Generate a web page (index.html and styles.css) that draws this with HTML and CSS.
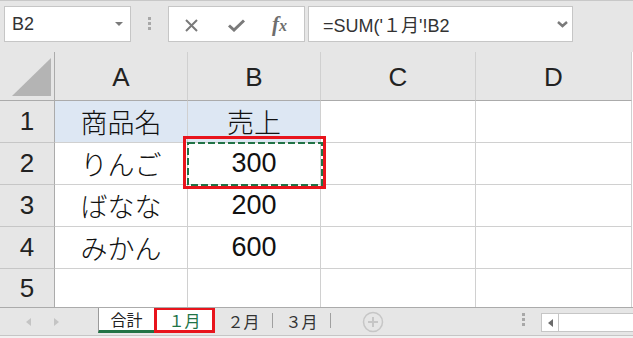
FILE: index.html
```html
<!DOCTYPE html>
<html lang="ja">
<head>
<meta charset="utf-8">
<link rel="stylesheet" href="styles.css">
</head>
<body>
<div class="toolbar">
  <div class="namebox"><span class="nb-text">B2</span><span class="nb-arrow"></span></div>
  <div class="vdots"><i></i><i></i><i></i></div>
  <div class="fxbox">
    <svg class="ic-x" width="13" height="13" viewBox="0 0 13 13"><path d="M1 1 L12 12 M12 1 L1 12" stroke="#7a7a7a" stroke-width="2" fill="none"/></svg>
    <svg class="ic-check" width="17" height="13" viewBox="0 0 17 13"><path d="M1 6.5 L6 11 L16 1.5" stroke="#7a7a7a" stroke-width="3" fill="none"/></svg>
    <span class="ic-fx"><span class="f">f</span><span class="x">x</span></span>
  </div>
  <div class="formula"><span class="f-text">=SUM('１月'!B2</span>
    <svg class="chev" width="11" height="7" viewBox="0 0 11 7"><path d="M1 1 L5.5 5 L10 1" stroke="#7a7a7a" stroke-width="2.5" fill="none"/></svg>
  </div>
</div>

<div class="sheet">
  <div class="corner"><svg width="54" height="48" viewBox="0 0 54 48"><polygon points="51,6 51,44 12,44" fill="#b4b4b4"/></svg></div>
  <div class="colh">A</div>
  <div class="colh">B</div>
  <div class="colh">C</div>
  <div class="colh">D</div>

  <div class="rowh">1</div>
  <div class="cell hl">商品名</div>
  <div class="cell hl">売上</div>
  <div class="cell"></div>
  <div class="cell"></div>

  <div class="rowh">2</div>
  <div class="cell">りんご</div>
  <div class="cell sel">300
    <svg class="ants" width="136" height="44" viewBox="0 0 136 44"><rect x="1" y="1" width="134" height="42" fill="none" stroke="#217346" stroke-width="2" stroke-dasharray="7 3"/></svg>
    <span class="redbox"></span>
  </div>
  <div class="cell"></div>
  <div class="cell"></div>

  <div class="rowh">3</div>
  <div class="cell">ばなな</div>
  <div class="cell">200</div>
  <div class="cell"></div>
  <div class="cell"></div>

  <div class="rowh">4</div>
  <div class="cell">みかん</div>
  <div class="cell">600</div>
  <div class="cell"></div>
  <div class="cell"></div>

  <div class="rowh last">5</div>
  <div class="cell last"></div>
  <div class="cell last"></div>
  <div class="cell last"></div>
  <div class="cell last"></div>
</div>

<div class="tabbar">
  <span class="nav nav-l"></span>
  <span class="nav nav-r"></span>
  <div class="tab active">合計</div>
  <div class="tab marked">１月</div>
  <div class="tab plain">２月</div>
  <span class="tsep"></span>
  <div class="tab plain">３月</div>
  <span class="tsep"></span>
  <svg class="plus" width="22" height="22" viewBox="0 0 22 22"><circle cx="11" cy="11" r="9.5" fill="none" stroke="#c6c6c6" stroke-width="1.5"/><path d="M11 6 V16 M6 11 H16" stroke="#c6c6c6" stroke-width="2"/></svg>
  <div class="vdots tdots"><i></i><i></i><i></i></div>
  <div class="hscroll"><span class="hs-btn"><span class="hs-tri"></span></span></div>
</div>
</body>
</html>
```

FILE: styles.css
```css
html { background: #f2f2f2; }
body {
  margin: 0;
  width: 633px;
  height: 338px;
  overflow: hidden;
  font-family: "Liberation Sans", "Noto Sans CJK JP", sans-serif;
  color: #222;
}

/* ---------- toolbar ---------- */
.toolbar {
  box-sizing: border-box;
  height: 52px;
  background: #e6e6e6;
  border-top: 1px solid #c8c8c8;
  padding: 5px 0 0 4px;
  display: flex;
  align-items: flex-start;
}
.toolbar > * { flex-shrink: 0; }
.namebox {
  box-sizing: border-box;
  width: 127px;
  height: 36px;
  background: #fff;
  border: 1px solid #c6c6c6;
  display: flex;
  align-items: center;
  padding-left: 7px;
  padding-right: 7px;
}
.nb-text { font-size: 18px; color: #333; }
.nb-arrow {
  margin-left: auto;
  width: 0; height: 0;
  border-left: 4px solid transparent;
  border-right: 4px solid transparent;
  border-top: 4px solid #7a7a7a;
}
.vdots {
  display: flex;
  flex-direction: column;
  gap: 2px;
  margin-left: 17px;
  margin-top: 11px;
}
.vdots i { display: block; width: 3px; height: 3px; background: #a8a8a8; }
.fxbox {
  box-sizing: border-box;
  width: 137px;
  height: 36px;
  margin-left: 17px;
  background: #fff;
  border: 1px solid #c6c6c6;
  display: flex;
  align-items: center;
  padding-left: 16px;
}
.ic-x { display: block; margin-top: 2px; }
.ic-check { display: block; margin-left: 30px; margin-top: 2px; }
.ic-fx {
  margin-left: 27px;
  font-family: "Liberation Serif", "DejaVu Serif", serif;
  font-style: italic;
  font-weight: bold;
  color: #6e6e6e;
  line-height: 1;
}
.ic-fx .f { font-size: 21px; }
.ic-fx .x { font-size: 16px; }
.formula {
  box-sizing: border-box;
  width: 265px;
  height: 36px;
  margin-left: 3px;
  background: #fff;
  border: 1px solid #c6c6c6;
  display: flex;
  align-items: center;
  padding-left: 14px;
  padding-right: 4px;
}
.f-text { font-size: 18px; color: #333; white-space: pre; }
.chev { display: block; margin-left: auto; margin-top: 1px; }

/* ---------- sheet ---------- */
.sheet {
  display: grid;
  grid-template-columns: 55px 133px 133px 155px 156px;
  grid-template-rows: 49px 42px 42px 42px 42px 38px;
  background: #fff;
}
.corner, .colh, .rowh, .cell {
  box-sizing: border-box;
  display: flex;
  align-items: center;
  justify-content: center;
}
.corner {
  background: #e6e6e6;
  border-right: 1px solid #ababab;
  border-bottom: 1px solid #ababab;
}
.corner svg { display: block; }
.colh {
  background: #e6e6e6;
  border-right: 1px solid #d0d0d0;
  border-bottom: 1px solid #ababab;
  font-size: 26px;
  padding-top: 2px;
}
.rowh {
  background: #e6e6e6;
  border-right: 1px solid #ababab;
  border-bottom: 1px solid #c6c6c6;
  font-size: 26px;
}
.cell {
  background: #fff;
  border-right: 1px solid #d0d0d0;
  border-bottom: 1px solid #d0d0d0;
  font-size: 27px;
  font-weight: 300;
  color: #111;
}
.cell.hl { background: #dde7f3; }
.rowh.last, .cell.last { border-bottom: none; }
.sel { position: relative; }
.ants { position: absolute; left: -1px; top: -1px; }
.redbox {
  position: absolute;
  left: -5px;
  top: -7px;
  width: 143px;
  height: 53px;
  box-sizing: border-box;
  border: 3px solid #e8141c;
}

/* ---------- tab bar ---------- */
.tabbar {
  box-sizing: content-box;
  height: 27px;
  background: #e6e6e6;
  border-top: 1px solid #ababab;
  border-bottom: 1px solid #c6c6c6;
  display: flex;
  align-items: flex-start;
  overflow: hidden;
}
.tabbar > * { flex-shrink: 0; }
.nav {
  width: 0; height: 0;
  margin-top: 10px;
  border-top: 4px solid transparent;
  border-bottom: 4px solid transparent;
}
.nav-l { margin-left: 26px; border-right: 5px solid #c4c4c4; }
.nav-r { margin-left: 23px; border-left: 5px solid #c4c4c4; }
.tab {
  box-sizing: border-box;
  height: 25px;
  display: flex;
  align-items: center;
  justify-content: center;
  font-family: "Noto Sans CJK JP", sans-serif;
  font-size: 16px;
  line-height: 1;
  color: #333;
}
.tab.active {
  margin-left: 39px;
  width: 56px;
  background: #fff;
  border-left: 1px solid #9a9a9a;
  border-bottom: 3px solid #217346;
  color: #222;
}
.tab.marked {
  width: 61px;
  height: 26px;
  margin-top: -1px;
  background: #fff;
  border: 3px solid #e8141c;
  color: #217346;
}
.tab.plain { width: 57px; }
.tsep { width: 1px; height: 15px; margin-top: 5px; background: #a0a0a0; }
.plus { display: block; margin-left: 31px; margin-top: 3px; }
.tdots { margin-left: 138px; margin-top: 5px; }
.hscroll {
  box-sizing: border-box;
  margin-left: 16px;
  margin-top: 5px;
  width: 100px;
  height: 19px;
  background: #fff;
  border: 1px solid #c6c6c6;
  border-right: none;
  display: flex;
}
.hs-btn {
  box-sizing: border-box;
  width: 17px;
  height: 100%;
  border-right: 1px solid #c6c6c6;
  display: flex;
  align-items: center;
  justify-content: center;
}
.hs-tri {
  width: 0; height: 0;
  border-top: 4px solid transparent;
  border-bottom: 4px solid transparent;
  border-right: 5px solid #6a6a6a;
}
```
